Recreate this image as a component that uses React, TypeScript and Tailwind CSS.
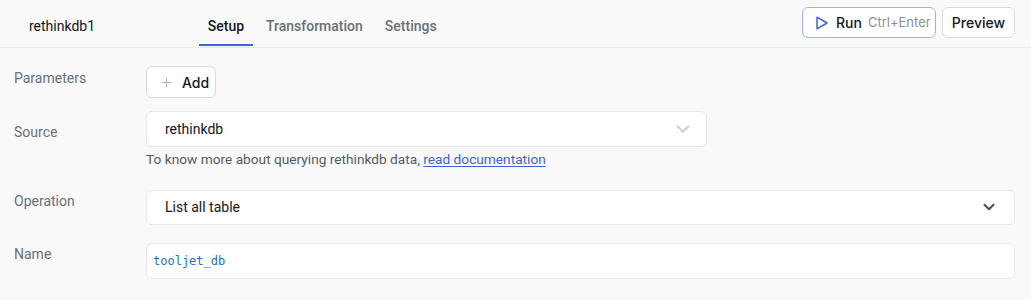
import { ChevronDown, Plus } from 'lucide-react'

const labelClass = `w-[132px] shrink-0 text-[14px] text-[#687076] leading-5`

const boxClass = `
  bg-white border border-[#e4e7eb] rounded-[6px]
  text-[14px] text-[#11181c]
`

export default function App() {
  return (
    <main className="w-[1031px] h-[300px] bg-[#f9f9fa] font-['Roboto',sans-serif] overflow-hidden">
      {/* HEADER */}
      <header className="h-[48px] flex items-stretch border-b border-[#e4e7eb] pl-[29px] pr-[16px]">
        <div className="w-[170px] flex items-center text-[14px] text-[#11181c] pt-[5px]">
          rethinkdb1
        </div>

        <nav className="flex items-stretch text-[14px]">
          <div className="relative w-[54px] flex items-center justify-center text-[#11181c] font-medium pt-[6px]">
            Setup
            <span className="absolute left-0 right-0 bottom-[1px] h-[2px] bg-[#3e63dd]" />
          </div>
          <div className="ml-[13px] flex items-center text-[#687076] font-medium pt-[6px]">Transformation</div>
          <div className="ml-[22px] flex items-center text-[#687076] font-medium pt-[6px]">Settings</div>
        </nav>

        <div className="ml-auto flex items-center gap-[6px] pb-[2px] font-['Inter',sans-serif]">
          <button className="h-[31px] w-[134px] flex items-center pl-[12px] rounded-[6px] border border-[#9db1f0] bg-white">
            <svg width="14" height="16" viewBox="0 0 14 16" fill="none" className="mr-[7px]">
              <path d="M2 2.2 L12 8 L2 13.8 Z" stroke="#3e63dd" strokeWidth="1.5" strokeLinejoin="round" />
            </svg>
            <span className="text-[14px] text-[#11181c] font-medium">Run</span>
            <span className="ml-[6px] text-[13px] text-[#889096]">Ctrl+Enter</span>
          </button>
          <button className="h-[31px] w-[73px] rounded-[6px] border border-[#d7dbdf] bg-white text-[14px] text-[#11181c] font-medium">
            Preview
          </button>
        </div>
      </header>

      {/* FORM */}
      <section className="pl-[14px] pr-[16px]">
        <div className="flex items-start pt-[18px]">
          <div className={`${labelClass} pt-[2px]`}>Parameters</div>
          <button className="h-[32px] w-[70px] flex items-center pl-[12px] gap-[8px] rounded-[6px] border border-[#d7dbdf] bg-white text-[14px] text-[#11181c] font-medium font-['Inter',sans-serif]">
            <Plus size={15} strokeWidth={1.25} className="text-[#9aa0a6]" />
            Add
          </button>
        </div>

        <div className="flex items-start pt-[13px]">
          <div className={`${labelClass} pt-[11px]`}>Source</div>
          <div>
            <div className={`${boxClass} w-[561px] h-[36px] flex items-center pl-[18px] pr-[12px]`}>
              <span className="flex-1">rethinkdb</span>
              <ChevronDown size={22} strokeWidth={2.25} className="text-[#cdd0d3]" />
            </div>
            <p className="mt-[2px] text-[13.7px] text-[#545b61]">
              To know more about querying rethinkdb data,{' '}
              <a className="text-[#3e63dd] underline underline-offset-2">read documentation</a>
            </p>
          </div>
        </div>

        <div className="flex items-start pt-[20px]">
          <div className={`${labelClass} pt-[1px]`}>Operation</div>
          <div className={`${boxClass} flex-1 h-[35px] flex items-center pl-[18px] pr-[16px]`}>
            <span className="flex-1">List all table</span>
            <ChevronDown size={18} strokeWidth={2.75} className="text-[#4b5056]" />
          </div>
        </div>

        <div className="flex items-start pt-[18px]">
          <div className={`${labelClass} pt-[1px]`}>Name</div>
          <div className={`${boxClass} flex-1 h-[36px] flex items-center pl-[6px] border-[#d7dbdf]`}>
            <span className="font-['DejaVu_Sans_Mono',monospace] text-[12px] text-[#1f6fd0]">tooljet_db</span>
          </div>
        </div>
      </section>
    </main>
  )
}
